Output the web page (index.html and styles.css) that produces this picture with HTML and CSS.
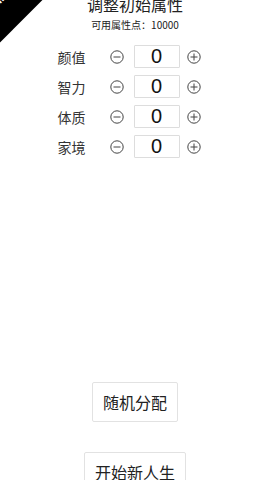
FILE: index.html
```html
<!DOCTYPE html>
<html lang="zh">
<head>
  <meta charset="UTF-8">
  <meta name="viewport" content="width=device-width, initial-scale=1.0">
  <title>调整初始属性</title>
  <link rel="stylesheet" href="styles.css">
</head>
<body>
  <div class="corner"><span>Fork me</span></div>
  <main class="page">
    <h1 class="title">调整初始属性</h1>
    <p class="points">可用属性点：10000</p>

    <div class="props">
      <div class="prop">
        <span class="prop-name">颜值</span>
        <button class="icon-btn" type="button">
          <svg width="14" height="14" viewBox="0 0 14 14"><circle cx="7" cy="7" r="6.2"/><path d="M3.5 7h7"/></svg>
        </button>
        <input class="prop-value" type="text" value="0">
        <button class="icon-btn" type="button">
          <svg width="14" height="14" viewBox="0 0 14 14"><circle cx="7" cy="7" r="6.2"/><path d="M3.5 7h7M7 3.5v7"/></svg>
        </button>
      </div>
      <div class="prop">
        <span class="prop-name">智力</span>
        <button class="icon-btn" type="button">
          <svg width="14" height="14" viewBox="0 0 14 14"><circle cx="7" cy="7" r="6.2"/><path d="M3.5 7h7"/></svg>
        </button>
        <input class="prop-value" type="text" value="0">
        <button class="icon-btn" type="button">
          <svg width="14" height="14" viewBox="0 0 14 14"><circle cx="7" cy="7" r="6.2"/><path d="M3.5 7h7M7 3.5v7"/></svg>
        </button>
      </div>
      <div class="prop">
        <span class="prop-name">体质</span>
        <button class="icon-btn" type="button">
          <svg width="14" height="14" viewBox="0 0 14 14"><circle cx="7" cy="7" r="6.2"/><path d="M3.5 7h7"/></svg>
        </button>
        <input class="prop-value" type="text" value="0">
        <button class="icon-btn" type="button">
          <svg width="14" height="14" viewBox="0 0 14 14"><circle cx="7" cy="7" r="6.2"/><path d="M3.5 7h7M7 3.5v7"/></svg>
        </button>
      </div>
      <div class="prop">
        <span class="prop-name">家境</span>
        <button class="icon-btn" type="button">
          <svg width="14" height="14" viewBox="0 0 14 14"><circle cx="7" cy="7" r="6.2"/><path d="M3.5 7h7"/></svg>
        </button>
        <input class="prop-value" type="text" value="0">
        <button class="icon-btn" type="button">
          <svg width="14" height="14" viewBox="0 0 14 14"><circle cx="7" cy="7" r="6.2"/><path d="M3.5 7h7M7 3.5v7"/></svg>
        </button>
      </div>
    </div>

    <div class="actions">
      <button class="btn" type="button">随机分配</button>
      <button class="btn" type="button">开始新人生</button>
    </div>
  </main>
</body>
</html>
```

FILE: styles.css
```css
body {
  margin: 0;
  font-family: "Noto Sans CJK SC", "Noto Sans", sans-serif;
  background: #fff;
  color: #222;
  overflow: hidden;
}
.corner {
  position: absolute;
  top: -30px;
  left: -30px;
  width: 60px;
  height: 60px;
  background: #000;
  transform: rotate(45deg);
  overflow: hidden;
}
.corner span {
  position: absolute;
  top: 36px;
  left: -4px;
  width: 68px;
  color: #fff;
  font: bold 9px "DejaVu Sans", sans-serif;
  text-align: center;
  transform: rotate(-90deg);
}
.page {
  display: flex;
  flex-direction: column;
  align-items: center;
}
.title {
  margin: -6px 0 0;
  font-size: 16px;
  font-weight: normal;
  line-height: 20px;
}
.points {
  margin: 4px 0 0;
  font-size: 10px;
  line-height: 14px;
}
.props {
  display: flex;
  flex-direction: column;
  gap: 7px;
  margin-top: 13px;
  margin-left: -12px;
}
.prop {
  display: flex;
  align-items: center;
  height: 23px;
}
.prop-name {
  width: 28px;
  margin-right: 24px;
  font-size: 14px;
  color: #333;
}
.icon-btn {
  display: flex;
  padding: 0;
  border: none;
  background: none;
}
.icon-btn svg {
  fill: none;
  stroke: #444;
  stroke-width: 1;
}
.prop-value {
  box-sizing: border-box;
  width: 46px;
  height: 23px;
  margin: 0 7px 0 10px;
  padding: 0;
  border: 1px solid #ddd;
  border-radius: 1px;
  font-family: "Liberation Sans", sans-serif;
  font-size: 20px;
  text-align: center;
  color: #111;
}
.actions {
  display: flex;
  flex-direction: column;
  align-items: center;
  gap: 30px;
  margin-top: 224px;
}
.btn {
  height: 40px;
  padding: 0 10px;
  border: 1px solid #e2e2e2;
  border-radius: 2px;
  background: #fff;
  font-family: "Noto Sans CJK SC", sans-serif;
  font-size: 16px;
  color: #222;
}
```
